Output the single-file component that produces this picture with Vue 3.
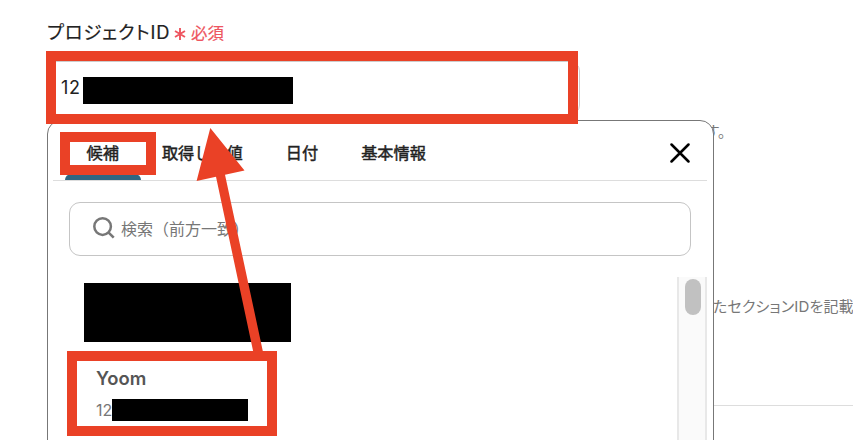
<template>
  <div class="page">
    <section class="form">
      <div class="field-label">
        <span class="label-text">プロジェクトID</span>
        <svg class="asterisk" width="12" height="14" viewBox="0 0 12 14" fill="none">
          <path d="M6 1V13M1 4L11 10M11 4L1 10" stroke="currentColor" stroke-width="1.9" />
        </svg>
        <span class="required">必須</span>
      </div>
      <div class="field-input">
        <span>12</span>
        <span class="mask mask-input"></span>
      </div>
      <p class="help help-first">ます。</p>
      <p class="help help-second">たセクションIDを記載</p>
      <hr class="divider" />
    </section>

    <div class="popup">
      <div class="tabs">
        <button
          v-for="(tab, index) in tabs"
          :key="tab"
          class="tab"
          :class="{ active: index === activeTab }"
          @click="activeTab = index"
        >
          {{ tab }}
        </button>
        <button class="close-btn">
          <svg width="20" height="20" viewBox="0 0 20 20" fill="none">
            <path
              d="M1.5 1.5L18.5 18.5M18.5 1.5L1.5 18.5"
              stroke="currentColor"
              stroke-width="2.5"
              stroke-linecap="round"
            />
          </svg>
        </button>
      </div>

      <div class="search">
        <svg width="22" height="22" viewBox="0 0 22 22" fill="none">
          <circle cx="9.6" cy="9.6" r="8.3" stroke="currentColor" stroke-width="2.5" />
          <path d="M15.4 15.4L20.7 20.7" stroke="currentColor" stroke-width="2.6" />
        </svg>
        <span>検索（前方一致）</span>
      </div>

      <div class="results">
        <div class="list">
          <div class="mask mask-item"></div>
          <div class="item">
            <div class="item-name">Yoom</div>
            <div class="item-id">
              <span>12</span>
              <span class="mask mask-id"></span>
            </div>
          </div>
        </div>
        <div class="scrollbar">
          <div class="thumb"></div>
        </div>
      </div>
    </div>

    <div class="mark mark-input"></div>
    <div class="mark mark-tab"></div>
    <div class="mark mark-item"></div>
    <svg class="arrow" width="853" height="440" viewBox="0 0 853 440">
      <path d="M210.3 128L244.5 170.5L225 174.7L263 352H253.3L216 176.8L196.6 181Z" fill="#ea4126" />
    </svg>
  </div>
</template>

<script setup>
import { ref } from 'vue'

const tabs = ['候補', '取得した値', '日付', '基本情報']
const activeTab = ref(0)
</script>

<style>
body {
  background: #fff;
}
</style>

<style scoped>
.page {
  position: relative;
  width: 853px;
  height: 440px;
  overflow: hidden;
  background: #fff;
  font-family: Inter, 'Noto Sans CJK JP', sans-serif;
  color: #222;
}

.page * {
  box-sizing: border-box;
}

.form {
  padding: 17px 0 0 48px;
}

.field-label {
  display: flex;
  align-items: center;
  height: 28px;
  font-size: 18px;
  -webkit-text-stroke: 0.2px currentColor;
}

.label-text {
  width: 126px;
  margin-left: -1px;
  font-size: 18.3px;
  font-feature-settings: 'palt';
  letter-spacing: 0.9px;
  white-space: nowrap;
}

.asterisk {
  margin: 5px 0 0 1px;
  color: #ee5560;
}

.required {
  margin: 2px 0 0 5px;
  color: #ee5560;
  font-size: 16.4px;
}

.field-input {
  display: flex;
  align-items: center;
  width: 533px;
  height: 54px;
  margin: 16px 0 0 -1px;
  padding-left: 13px;
  border: 1px solid #ccc;
  border-radius: 10px;
  font-size: 18px;
  letter-spacing: 0.6px;
}

.field-input span:first-child {
  margin-top: -1px;
}

.mask {
  display: block;
  background: #000;
}

.mask-input {
  width: 210px;
  height: 27px;
  margin: 4px 0 0 2px;
}

.help {
  margin: 0;
  color: #777;
  font-size: 15px;
  line-height: 24px;
  letter-spacing: 0.15px;
  white-space: nowrap;
  font-feature-settings: 'palt';
}

.help-first {
  width: 677.5px;
  margin-top: 5px;
  text-align: right;
}

.help-second {
  margin: 151px 0 0 665px;
}

.divider {
  height: 1px;
  margin: 86px 0 0;
  border: 0;
  background: #ddd;
}

.popup {
  position: absolute;
  top: 120px;
  left: 47px;
  width: 667px;
  height: 340px;
  border: 1px solid #777;
  border-radius: 14px;
  background: #fff;
}

.tabs {
  display: flex;
  height: 60px;
  margin: 0 6px 0 5px;
  padding-left: 12px;
  border-bottom: 1px solid #ddd;
}

.tab {
  position: relative;
  height: 59px;
  padding: 2px 21.5px 0;
  border: 0;
  background: none;
  color: #222;
  font: inherit;
  font-size: 16.2px;
  -webkit-text-stroke: 0.45px currentColor;
  white-space: nowrap;
}

.tab.active::after {
  content: '';
  position: absolute;
  bottom: 0;
  left: 0;
  width: 76px;
  height: 6px;
  border-radius: 6px 6px 0 0;
  background: #2f6682;
}

.close-btn {
  display: flex;
  align-items: center;
  margin-left: auto;
  padding: 5px 17px 0 0;
  border: 0;
  background: none;
  color: #000;
}

.search {
  display: flex;
  align-items: center;
  gap: 6px;
  height: 54px;
  margin: 21px 22px 0 21px;
  padding-left: 23px;
  border: 1px solid #c5c5c5;
  border-radius: 11px;
  color: #777;
  font-size: 16px;
}

.search svg {
  margin-top: -3px;
}

.search span {
  margin-top: -2px;
}

.results {
  display: flex;
  justify-content: space-between;
  height: 180px;
  margin: 21px 6px 0 19px;
}

.list {
  width: 500px;
}

.mask-item {
  width: 207px;
  height: 59px;
  margin: 6px 0 0 17px;
}

.item {
  padding: 24px 0 0 29px;
}

.item-name {
  color: #555;
  font-size: 18.4px;
  font-weight: 600;
  line-height: 24px;
}

.item-id {
  display: flex;
  margin-top: 9px;
  color: #777;
  font-size: 16px;
  line-height: 22px;
}

.mask-id {
  width: 136px;
  height: 22px;
}

.scrollbar {
  width: 30px;
  padding: 2px 0 0 6px;
  border: solid #e8e8e8;
  border-width: 0 2px;
  background: #fafafa;
}

.thumb {
  width: 16px;
  height: 36px;
  border-radius: 8px;
  background: #c1c1c1;
}

.mark {
  position: absolute;
  border: 10px solid #ea4126;
}

.mark-input {
  top: 51px;
  left: 46px;
  width: 532px;
  height: 73px;
}

.mark-tab {
  top: 132px;
  left: 60px;
  width: 96px;
  height: 43px;
}

.mark-item {
  top: 351px;
  left: 67px;
  width: 210px;
  height: 85px;
}

.arrow {
  position: absolute;
  top: 0;
  left: 0;
}
</style>
